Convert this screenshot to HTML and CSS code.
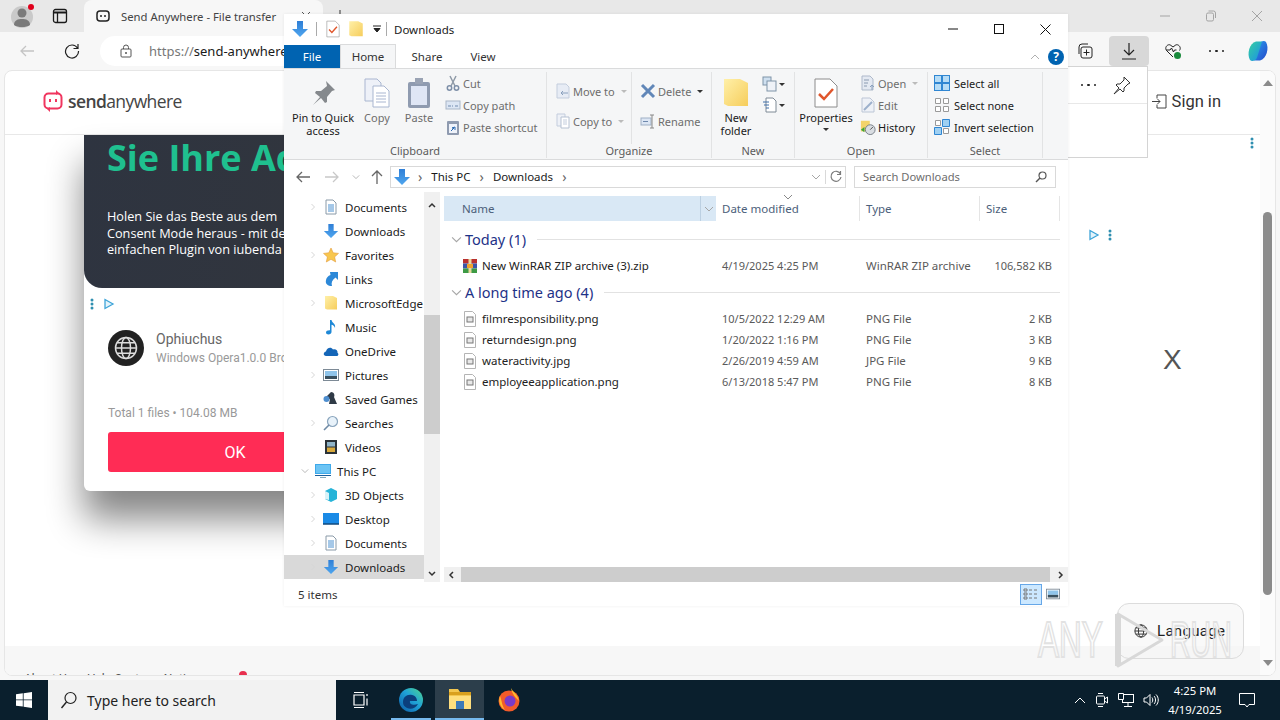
FILE: index.html
```html
<html>
    <head>
        <meta charset="utf-8">
        <title>Send Anywhere - File transfer</title>
        <link rel="stylesheet" href="styles.css">
    </head>
    <body>
        <svg class="defs" width="0" height="0">
            <defs>
                <linearGradient id="blue" x1="0" y1="0" x2="0" y2="1"><stop offset="0" stop-color="#2f7fd6"/><stop offset="1" stop-color="#4fa6ef"/></linearGradient>
                <linearGradient id="yellow" x1="0" y1="0" x2="1" y2="1"><stop offset="0" stop-color="#fff0a8"/><stop offset="1" stop-color="#f6cd5c"/></linearGradient>
                <linearGradient id="edge" x1="1" y1="0" x2="0" y2="1"><stop offset="0" stop-color="#4fd88c"/><stop offset=".45" stop-color="#1fa2d8"/><stop offset="1" stop-color="#0c59a4"/></linearGradient>
                <linearGradient id="copilot" x1="0" y1="0" x2="1" y2="1"><stop offset="0" stop-color="#35d0a0"/><stop offset="1" stop-color="#1b8fe8"/></linearGradient>
                <linearGradient id="copilot2" x1="0" y1="0" x2="1" y2="1"><stop offset="0" stop-color="#2a9ff0"/><stop offset="1" stop-color="#2448c8"/></linearGradient>
                <symbol id="i-down" viewBox="0 0 18 18"><path d="M6 1h6v8h5l-8 8-8-8h5z" fill="url(#blue)"/></symbol>
                <symbol id="i-doc" viewBox="0 0 16 16"><path d="M3 1h7l3 3v11H3z" fill="#fff" stroke="#8a9aa8"/><path d="M5 6h6M5 8h6M5 10h6M5 12h6" stroke="#4a90d0"/></symbol>
                <symbol id="i-file" viewBox="0 0 16 16"><path d="M2.500 .5h8l3 3v12h-11z" fill="#fff" stroke="#b4b4b4"/><rect x="5" y="6" width="6" height="5" fill="#e8e8e8" stroke="#777"/></symbol>
                <symbol id="i-folder" viewBox="0 0 16 16"><path d="M2 1h8l4 2v11.500H4l-2-1z" fill="url(#yellow)"/></symbol>
                <symbol id="i-check" viewBox="0 0 32 32"><path d="M5 2h15l7 7v21H5z" fill="#fff" stroke="#8c8c8c"/><path d="M9 17l5 5 9-10" fill="none" stroke="#e0562c" stroke-width="2.500"/></symbol>
                <symbol id="i-pin" viewBox="0 0 32 32"><path d="M19 4l9 9-3 1-5 6 0 5-2 1-4-5-8 7 7-8-5-4 1-2 5 0 6-5z" fill="#85898d"/></symbol>
                <symbol id="i-copy" viewBox="0 0 32 32"><path d="M4 2h12l4 4v18H4z" fill="#eef1f8" stroke="#a9b6d0"/><path d="M12 9h11l5 5v16H12z" fill="#fff" stroke="#a9b6d0"/><path d="M15 16h10M15 19h10M15 22h10M15 25h10" stroke="#a9b6d0"/></symbol>
                <symbol id="i-paste" viewBox="0 0 32 32"><rect x="5" y="5" width="22" height="26" rx="2" fill="#8f9bb0"/><rect x="8" y="9" width="16" height="19" fill="#dfe6f5"/><rect x="12" y="1" width="8" height="6" fill="#9aa3b4"/></symbol>
                <symbol id="i-cut" viewBox="0 0 16 16"><path d="M5 1l5 10M11 1L6 11" stroke="#8f9aa8" stroke-width="1.500"/><circle cx="4.500" cy="13" r="2.200" fill="none" stroke="#7d8fa8" stroke-width="1.500"/><circle cx="11.500" cy="13" r="2.200" fill="none" stroke="#7d8fa8" stroke-width="1.500"/></symbol>
                <symbol id="i-path" viewBox="0 0 16 16"><rect x="1" y="4" width="14" height="8" fill="#dce6f4" stroke="#a9b6c8"/><path d="M3 9h3M7 9h1M10 9h3" stroke="#6f89ad"/></symbol>
                <symbol id="i-shortcut" viewBox="0 0 16 16"><rect x="2" y="2" width="12" height="14" rx="1" fill="#8f9bb0"/><rect x="4" y="5" width="8" height="9" fill="#eef2fa"/><path d="M6 12l3-3-2 0 3-1v3" stroke="#2c6ab0" fill="none"/></symbol>
                <symbol id="i-moveto" viewBox="0 0 16 16"><path d="M2 1h9l3 3v11H2z" fill="#e7ecf5" stroke="#c3cddd"/><path d="M13 10H6m2-2l-2 2 2 2" stroke="#8aa0bd" fill="none"/></symbol>
                <symbol id="i-copyto" viewBox="0 0 16 16"><path d="M2 1h8v12H2z" fill="#eef1f7" stroke="#c3cddd"/><path d="M6 4h8v11H6z" fill="#fff" stroke="#b6c1d2"/><path d="M8 7h4M8 9h4M8 11h4" stroke="#c3cddd"/></symbol>
                <symbol id="i-x" viewBox="0 0 16 16"><path d="M2 2l12 12M14 2L2 14" stroke="#6187b8" stroke-width="3"/></symbol>
                <symbol id="i-rename" viewBox="0 0 16 16"><rect x="1" y="5" width="10" height="7" fill="#dce6f4" stroke="#9fb0c6"/><path d="M3 8.500h5" stroke="#6f89ad"/><path d="M12 2v13M10 2h4M10 15h4" stroke="#888"/></symbol>
                <symbol id="i-newitem" viewBox="0 0 16 16"><rect x="1" y="1" width="8" height="8" fill="#cfe0f0" stroke="#7f93a8"/><rect x="5" y="5" width="9" height="10" fill="#eef2f8" stroke="#7f93a8"/></symbol>
                <symbol id="i-easy" viewBox="0 0 16 16"><path d="M4 1h7l3 3v11H4z" fill="#fff" stroke="#7f8a96"/><path d="M1 5h6M2 8h5M4 11h3" stroke="#3f6fa8"/></symbol>
                <symbol id="i-open" viewBox="0 0 16 16"><path d="M2 1h8l3 3v11H2z" fill="#e4e9f2" stroke="#aeb9ca"/><path d="M4 5h5M4 8h4M4 11h3" stroke="#8a9ab0"/><path d="M12 15v-5m-2 2l2-2 2 2" stroke="#8aa0bd" fill="none"/></symbol>
                <symbol id="i-edit" viewBox="0 0 16 16"><path d="M2 1h8l4 4v10H2z" fill="#eef1f7" stroke="#bcc6d6"/><path d="M4 13l8-8" stroke="#9cb0cc" stroke-width="2"/></symbol>
                <symbol id="i-history" viewBox="0 0 18 18"><path d="M1 2h10v12H1z" fill="#f3d36a"/><circle cx="11.500" cy="12" r="5.500" fill="#d9dde2" stroke="#6f7780"/><path d="M11.500 12l3-3" stroke="#444"/><path d="M1 12l4-3v6z" fill="#3ea53a"/></symbol>
                <symbol id="i-all" viewBox="0 0 16 16"><rect width="16" height="16" fill="#2f86d2"/><path d="M1 1h6v6H1zM9 1h6v6H9zM1 9h6v6H1zM9 9h6v6H9z" fill="#b6dcf6"/></symbol>
                <symbol id="i-none" viewBox="0 0 16 16"><path d="M1.500 1.500h5v5h-5zM9.500 1.500h5v5h-5zM1.500 9.500h5v5h-5zM9.500 9.500h5v5h-5z" fill="#fff" stroke="#9a9a9a"/></symbol>
                <symbol id="i-invert" viewBox="0 0 16 16"><path d="M8.500 .5h7v7h-7zM.5 8.500h7v7h-7z" fill="#9fd0f2" stroke="#2f86d2"/><path d="M1.500 1.500h5v5h-5zM9.500 9.500h5v5h-5z" fill="#fff" stroke="#9a9a9a"/></symbol>
                <symbol id="i-rar" viewBox="0 0 16 16"><rect x="1" y="1" width="14" height="4.500" fill="#b9302f"/><rect x="1" y="5.500" width="14" height="5" fill="#3a55a8"/><rect x="1" y="10.500" width="14" height="4.500" fill="#3d9a45"/><rect x="6.500" y="1" width="3" height="14" fill="#e8d9a0"/><rect x="5" y="6" width="6" height="4" fill="#f2a32c"/></symbol>
                <symbol id="i-star" viewBox="0 0 16 16"><path d="M8 1l2.200 4.800 5.300.6-3.900 3.500 1.100 5.100L8 12.300l-4.700 2.700 1.100-5.100L.5 6.400l5.300-.6z" fill="#f8c74e" stroke="#e39a3a" stroke-width=".6"/></symbol>
                <symbol id="i-link" viewBox="0 0 16 16"><path d="M7 1h8v8l-2.500-2.500C9 9 8 12 9 15 5 15 2 13 3 9c.6-2.500 2-4 4.500-5z" fill="#2c88d8"/></symbol>
                <symbol id="i-music" viewBox="0 0 16 16"><path d="M7 1h1.500c.5 3 4.500 3.500 3.500 8-.5-2-2-3-3.500-3.200V13c0 1.500-1.500 2.500-3 2.500S3 14.500 3 13.200 4.800 11 7 11.200z" fill="#1e88d6"/></symbol>
                <symbol id="i-cloud" viewBox="0 0 16 16"><path d="M3 13c-3 0-3-4 0-4.500C3.500 5 8 3 10 6.500c2.500-1 5 1 4.500 3.200 1.500 1 1 3.300-1 3.300z" fill="#1466b8"/></symbol>
                <symbol id="i-picture" viewBox="0 0 16 16"><rect x=".5" y="2.500" width="15" height="11" fill="#fff" stroke="#7d8a96"/><rect x="2" y="4" width="12" height="5" fill="#8fc4ea"/><rect x="2" y="9" width="12" height="3" fill="#39505f"/></symbol>
                <symbol id="i-games" viewBox="0 0 16 16"><path d="M8 1c3 0 4 3 3 5l3 7H6l1-5-3 1-2-2z" fill="#2f3a46"/><circle cx="3.500" cy="8" r="3" fill="#4f8fd0"/></symbol>
                <symbol id="i-search" viewBox="0 0 16 16"><circle cx="9.500" cy="6.500" r="5" fill="#e8f2fa" stroke="#8aa5bd" stroke-width="1.200"/><path d="M6 10l-5 5" stroke="#6e8aa5" stroke-width="1.600"/></symbol>
                <symbol id="i-film" viewBox="0 0 16 16"><rect x="2" y="1" width="12" height="14" fill="#2a3238"/><rect x="4" y="3" width="8" height="4.500" fill="#8fb4c8"/><rect x="4" y="8.500" width="8" height="4.500" fill="#d8a93c"/></symbol>
                <symbol id="i-pc" viewBox="0 0 16 16"><rect y="1" width="16" height="10" fill="#3fa9ea"/><rect x="1" y="2" width="14" height="8" fill="#6cc4f4"/><path d="M0 12.500h16" stroke="#1a5f9c"/><path d="M5 14.500h6" stroke="#8ab"/></symbol>
                <symbol id="i-3d" viewBox="0 0 16 16"><path d="M8 1l6 3v8l-6 3-6-3V4z" fill="#27b4d8"/><path d="M2 4l4 2v7l-4-1z" fill="#d8f2f8"/></symbol>
                <symbol id="i-desk" viewBox="0 0 16 16"><rect y="2" width="16" height="11" fill="#1a8ae6"/><path d="M0 13h16" stroke="#10487c" stroke-width="1.500"/></symbol>
                <symbol id="i-chev" viewBox="0 0 8 8"><path d="M2.500 1l3 3-3 3" fill="none" stroke="#d6d6d6"/></symbol>
                <symbol id="i-chevd" viewBox="0 0 10 10"><path d="M1 3l4 4 4-4" fill="none" stroke="#a6a6a6"/></symbol>
                <symbol id="i-globe" viewBox="0 0 16 16"><circle cx="8" cy="8" r="7" fill="none" stroke="currentColor"/><ellipse cx="8" cy="8" rx="3" ry="7" fill="none" stroke="currentColor"/><path d="M1 8h14M2 4.500h12M2 11.500h12" stroke="currentColor"/></symbol>
                <symbol id="i-adplay" viewBox="0 0 12 12"><path d="M2 1.500l8 4.500-8 4.500z" fill="#e3f3fb" stroke="#3ea4d8" stroke-width="1.300"/></symbol>
                <symbol id="i-addots" viewBox="0 0 4 12"><circle cx="2" cy="2" r="1.500" fill="#2f8fb0"/><circle cx="2" cy="6" r="1.500" fill="#2f8fb0"/><circle cx="2" cy="10" r="1.500" fill="#2f8fb0"/></symbol>
            </defs>
        </svg>

        <div class="browser">
            <div class="tabbar">
                <div class="profile">
                    <svg width="26" height="26" viewBox="0 0 26 26"><circle cx="12" cy="14" r="11" fill="#c9c9c9"/><circle cx="12" cy="10" r="4.500" fill="#7a7a7a"/><path d="M4 22c0-5 4-6 8-6s8 1 8 6c-2 1.500-5 2-8 2s-6-.5-8-2z" fill="#7a7a7a"/><circle cx="21" cy="4" r="3" fill="#e0001c"/></svg>
                </div>
                <div class="tab-actions">
                    <svg width="16" height="16" viewBox="0 0 16 16"><rect x="1.500" y="1.500" width="13" height="13" rx="2" fill="none" stroke="#1a1a1a" stroke-width="1.300"/><path d="M2 4.500h12" stroke="#1a1a1a" stroke-width="2"/><path d="M5.500 4v10" stroke="#1a1a1a" stroke-width="1.300"/></svg>
                </div>
                <div class="tab">
                    <svg width="14" height="14" viewBox="0 0 14 14"><rect x="1" y="2" width="12" height="10" rx="3" fill="none" stroke="#222" stroke-width="1.500"/><path d="M5 6v2M9 6v2" stroke="#222" stroke-width="1.500"/></svg>
                    <span>Send Anywhere - File transfer</span>
                    <svg class="tab-close" width="8" height="8" viewBox="0 0 8 8"><path d="M0 0l8 8M8 0L0 8" stroke="#555"/></svg>
                </div>
                <svg class="tab-new" width="12" height="12" viewBox="0 0 12 12"><path d="M6 0v12M0 6h12" stroke="#333"/></svg>
                <div class="spacer"></div>
                <div class="win-controls">
                    <svg width="12" height="12" viewBox="0 0 12 12"><path d="M1 6h10" stroke="#a4a4a4"/></svg>
                    <svg width="12" height="12" viewBox="0 0 12 12"><rect x="1.500" y="3" width="7" height="8" rx="1.500" fill="none" stroke="#a4a4a4"/><path d="M3.500 1h5a2 2 0 0 1 2 2v5" fill="none" stroke="#a4a4a4"/></svg>
                    <svg width="12" height="12" viewBox="0 0 12 12"><path d="M1 1l10 10M11 1L1 11" stroke="#a4a4a4"/></svg>
                </div>
            </div>
            <div class="toolbar">
                <svg class="tool-back" width="16" height="16" viewBox="0 0 16 16"><path d="M15 8H2m5-5L2 8l5 5" fill="none" stroke="#c4c4c4" stroke-width="1.300"/></svg>
                <svg class="tool-reload" width="16" height="16" viewBox="0 0 16 16"><path d="M13.500 5A6.500 6.500 0 1 0 14.500 8M14 1v4.500H9.500" fill="none" stroke="#222" stroke-width="1.200"/></svg>
                <div class="urlbar">
                    <svg width="12" height="14" viewBox="0 0 12 14"><rect x="1" y="5" width="10" height="8" rx="1" fill="none" stroke="#555"/><path d="M3.500 5V3.500a2.500 2.500 0 0 1 5 0V5" fill="none" stroke="#555"/><circle cx="6" cy="9" r="1" fill="#555"/></svg>
                    <span><i>https://</i>send-anywhere.com</span>
                </div>
                <div class="tool-right">
                    <svg width="18" height="18" viewBox="0 0 18 18"><rect x="5" y="5" width="11" height="11" rx="2" fill="none" stroke="#222"/><path d="M3 12V5a3 3 0 0 1 3-3h6" fill="none" stroke="#222"/><path d="M10.500 7.500v6M7.500 10.500h6" stroke="#222"/></svg>
                    <div class="tool-download">
                        <svg width="16" height="18" viewBox="0 0 16 18"><path d="M8 1v12M3 8l5 5 5-5M1 17h14" fill="none" stroke="#222" stroke-width="1.200"/></svg>
                    </div>
                    <svg width="18" height="18" viewBox="0 0 18 18"><path d="M9 15L2.500 8.500C0 5 4.500 1 7 3.500L9 5l2-1.500C13.500 1 18 5 15.500 8.500" fill="none" stroke="#222"/><path d="M2 8h4l1.500-2 2 4 1-2h2" fill="none" stroke="#222"/><circle cx="13.500" cy="13.500" r="3.500" fill="#1a8a3c"/></svg>
                    <div class="tool-dots"><b></b><b></b><b></b></div>
                    <svg width="24" height="24" viewBox="0 0 24 24"><path d="M20 3c3.500 6 .5 17-6 18.500H8l5-16c1-3 5-4.500 7-2.500z" fill="url(#copilot2)"/><path d="M4 21C.5 15 3.500 4 10 2.500h6l-5 16c-1 3-5 4.500-7 2.500z" fill="url(#copilot)"/></svg>
                </div>
            </div>

            <div class="page">
                <div class="site-header">
                    <div class="logo">
                        <svg width="20" height="22" viewBox="0 0 20 22"><rect x="1.500" y="3.500" width="17" height="15" rx="4" fill="none" stroke="#f0365f" stroke-width="2"/><path d="M7 9v3M13 9v3" stroke="#f0365f" stroke-width="2"/><path d="M13 0l3 3-3 2zM7 22l-3-3 3-2z" fill="#f0365f"/></svg>
                        <span><b>send</b>anywhere</span>
                    </div>
                    <div class="sign-in">
                        <svg width="15" height="15" viewBox="0 0 15 15"><path d="M5 1h9v13H5v-3M5 4V1" fill="none" stroke="#444"/><path d="M0 7.500h8m-3-3 3 3-3 3" fill="none" stroke="#444"/></svg>
                        <span>Sign in</span>
                    </div>
                </div>
                <div class="site-main">
                    <div class="dialog">
                        <div class="promo">
                            <h2>Sie Ihre Ads</h2>
                            <p>Holen Sie das Beste aus dem<br>Consent Mode heraus - mit dem<br>einfachen Plugin von iubenda</p>
                        </div>
                        <div class="ad-marks">
                            <svg width="4" height="12"><use href="#i-addots"/></svg>
                            <svg width="12" height="12"><use href="#i-adplay"/></svg>
                        </div>
                        <div class="sender">
                            <div class="avatar"><svg width="24" height="24"><use href="#i-globe"/></svg></div>
                            <div class="sender-text">
                                <div class="sender-name">Ophiuchus</div>
                                <div class="sender-device">Windows Opera1.0.0 Browser</div>
                            </div>
                        </div>
                        <div class="total">Total 1 files • 104.08 MB</div>
                        <div class="ok-btn">OK</div>
                    </div>
                    <svg class="dots-top" width="4" height="12"><use href="#i-addots"/></svg>
                    <div class="ad-marks-right">
                        <svg width="12" height="12"><use href="#i-adplay"/></svg>
                        <svg width="4" height="12"><use href="#i-addots"/></svg>
                    </div>
                    <div class="close-x">X</div>
                </div>
                <div class="site-footer">
                    <span>About Us</span><span>Help Center</span><span>Notice</span><b class="red-dot"></b>
                </div>
                <div class="page-scroll">
                    <svg width="10" height="6" viewBox="0 0 10 6"><path d="M5 0l5 6H0z" fill="#8b8b8b"/></svg>
                    <div class="page-thumb"></div>
                    <svg width="10" height="6" viewBox="0 0 10 6"><path d="M5 6l5-6H0z" fill="#8b8b8b"/></svg>
                </div>
            </div>
        </div>

        <div class="dl-flyout">
            <div class="dl-head">
                <div class="tool-dots flyout"><b></b><b></b><b></b></div>
                <svg width="20" height="20" viewBox="0 0 20 20"><path d="M12 2l6 6-2 1-4 4 0 3-1 1-3-3-6 5 5-6-3-3 1-1 3 0 4-4z" fill="none" stroke="#333"/></svg>
            </div>
        </div>

        <div class="explorer">
            <div class="ex-title">
                <svg width="18" height="18"><use href="#i-down"/></svg>
                <i class="ex-sep"></i>
                <svg width="18" height="18"><use href="#i-check"/></svg>
                <svg width="18" height="18"><use href="#i-folder"/></svg>
                <svg class="qat-arrow" width="8" height="8" viewBox="0 0 8 8"><path d="M0 1h8M1 3.500h6L4 7z" stroke="#222" fill="#222"/></svg>
                <i class="ex-sep"></i>
                <span class="ex-name">Downloads</span>
                <div class="ex-controls">
                    <svg width="10" height="10" viewBox="0 0 10 10"><path d="M0 5h10" stroke="#111"/></svg>
                    <svg width="10" height="10" viewBox="0 0 10 10"><rect x=".5" y=".5" width="9" height="9" fill="none" stroke="#111"/></svg>
                    <svg width="11" height="11" viewBox="0 0 11 11"><path d="M.5.5l10 10M10.500.5l-10 10" stroke="#111"/></svg>
                </div>
            </div>
            <div class="ex-tabs">
                <div class="ex-tab file">File</div>
                <div class="ex-tab active">Home</div>
                <div class="ex-tab share">Share</div>
                <div class="ex-tab view">View</div>
                <div class="ex-help">
                    <svg width="10" height="6" viewBox="0 0 10 6"><path d="M1 5l4-4 4 4" fill="none" stroke="#b0b0b0"/></svg>
                    <span class="help-badge">?</span>
                </div>
            </div>
            <div class="ribbon">
                <div class="group g-clipboard">
                    <div class="group-body">
                        <div class="big w-pin"><svg width="32" height="32"><use href="#i-pin"/></svg><span>Pin to Quick<br>access</span></div>
                        <div class="big w-copy dim"><svg width="32" height="32"><use href="#i-copy"/></svg><span>Copy</span></div>
                        <div class="big w-paste dim"><svg width="32" height="32"><use href="#i-paste"/></svg><span>Paste</span></div>
                        <div class="small-col dim">
                            <div class="small"><svg width="16" height="16"><use href="#i-cut"/></svg>Cut</div>
                            <div class="small"><svg width="16" height="16"><use href="#i-path"/></svg>Copy path</div>
                            <div class="small"><svg width="16" height="16"><use href="#i-shortcut"/></svg>Paste shortcut</div>
                        </div>
                    </div>
                    <div class="group-label">Clipboard</div>
                </div>
                <div class="group g-organize">
                    <div class="group-body">
                        <div class="tall-col dim w-move">
                            <div class="small"><svg width="16" height="16"><use href="#i-moveto"/></svg>Move to<em class="caret light"></em></div>
                            <div class="small"><svg width="16" height="16"><use href="#i-copyto"/></svg>Copy to<em class="caret light"></em></div>
                        </div>
                        <div class="tall-col dim">
                            <div class="small"><svg width="16" height="16"><use href="#i-x"/></svg>Delete<em class="caret"></em></div>
                            <div class="small"><svg width="16" height="16"><use href="#i-rename"/></svg>Rename</div>
                        </div>
                    </div>
                    <div class="group-label">Organize</div>
                </div>
                <div class="group g-new">
                    <div class="group-body">
                        <div class="big w-folder"><svg width="32" height="32"><use href="#i-folder"/></svg><span>New<br>folder</span></div>
                        <div class="icon-col">
                            <div><svg width="16" height="16"><use href="#i-newitem"/></svg><em class="caret"></em></div>
                            <div><svg width="16" height="16"><use href="#i-easy"/></svg><em class="caret"></em></div>
                        </div>
                    </div>
                    <div class="group-label">New</div>
                </div>
                <div class="group g-open">
                    <div class="group-body">
                        <div class="big w-props"><svg width="32" height="32"><use href="#i-check"/></svg><span>Properties</span><em class="caret"></em></div>
                        <div class="small-col">
                            <div class="small dim"><svg width="16" height="16"><use href="#i-open"/></svg>Open<em class="caret light"></em></div>
                            <div class="small dim"><svg width="16" height="16"><use href="#i-edit"/></svg>Edit</div>
                            <div class="small"><svg width="16" height="16"><use href="#i-history"/></svg>History</div>
                        </div>
                    </div>
                    <div class="group-label">Open</div>
                </div>
                <div class="group g-select">
                    <div class="group-body">
                        <div class="small-col">
                            <div class="small"><svg width="16" height="16"><use href="#i-all"/></svg>Select all</div>
                            <div class="small"><svg width="16" height="16"><use href="#i-none"/></svg>Select none</div>
                            <div class="small"><svg width="16" height="16"><use href="#i-invert"/></svg>Invert selection</div>
                        </div>
                    </div>
                    <div class="group-label">Select</div>
                </div>
            </div>
            <div class="ex-nav">
                <svg class="nav-back" width="16" height="16" viewBox="0 0 16 16"><path d="M15 8H2m5-5L2 8l5 5" fill="none" stroke="#666" stroke-width="1.300"/></svg>
                <svg class="nav-fwd" width="16" height="16" viewBox="0 0 16 16"><path d="M1 8h13M9 3l5 5-5 5" fill="none" stroke="#c8c8c8" stroke-width="1.300"/></svg>
                <svg class="nav-small" width="8" height="8"><use href="#i-chevd"/></svg>
                <svg class="nav-up" width="16" height="16" viewBox="0 0 16 16"><path d="M8 15V2M3 7l5-5 5 5" fill="none" stroke="#666" stroke-width="1.300"/></svg>
                <div class="addr">
                    <svg width="18" height="18"><use href="#i-down"/></svg>
                    <em class="crumb-sep">›</em><span>This PC</span><em class="crumb-sep">›</em><span>Downloads</span><em class="crumb-sep">›</em>
                    <div class="addr-end">
                        <svg width="10" height="10"><use href="#i-chevd"/></svg>
                        <svg class="addr-refresh" width="14" height="14" viewBox="0 0 14 14"><path d="M11.500 4A5 5 0 1 0 12 7M11.500 1v3.500H8" fill="none" stroke="#7b7b7b" stroke-width="1.200"/></svg>
                    </div>
                </div>
                <div class="search-box">
                    <span>Search Downloads</span>
                    <svg width="12" height="12" viewBox="0 0 12 12"><circle cx="7.500" cy="4.500" r="3.500" fill="none" stroke="#555" stroke-width="1.200"/><path d="M5 7l-4 4" stroke="#555" stroke-width="1.500"/></svg>
                </div>
            </div>
            <div class="ex-body">
                <div class="tree">
                    <div class="tree-row"><svg class="tw" width="8" height="8"><use href="#i-chev"/></svg><svg width="16" height="16"><use href="#i-doc"/></svg>Documents</div>
                    <div class="tree-row"><svg class="tw" width="8" height="8"></svg><svg width="16" height="16"><use href="#i-down"/></svg>Downloads</div>
                    <div class="tree-row"><svg class="tw" width="8" height="8"><use href="#i-chev"/></svg><svg width="16" height="16"><use href="#i-star"/></svg>Favorites</div>
                    <div class="tree-row"><svg class="tw" width="8" height="8"></svg><svg width="16" height="16"><use href="#i-link"/></svg>Links</div>
                    <div class="tree-row"><svg class="tw" width="8" height="8"><use href="#i-chev"/></svg><svg width="16" height="16"><use href="#i-folder"/></svg>MicrosoftEdge</div>
                    <div class="tree-row"><svg class="tw" width="8" height="8"></svg><svg width="16" height="16"><use href="#i-music"/></svg>Music</div>
                    <div class="tree-row"><svg class="tw" width="8" height="8"></svg><svg width="16" height="16"><use href="#i-cloud"/></svg>OneDrive</div>
                    <div class="tree-row"><svg class="tw" width="8" height="8"><use href="#i-chev"/></svg><svg width="16" height="16"><use href="#i-picture"/></svg>Pictures</div>
                    <div class="tree-row"><svg class="tw" width="8" height="8"></svg><svg width="16" height="16"><use href="#i-games"/></svg>Saved Games</div>
                    <div class="tree-row"><svg class="tw" width="8" height="8"><use href="#i-chev"/></svg><svg width="16" height="16"><use href="#i-search"/></svg>Searches</div>
                    <div class="tree-row"><svg class="tw" width="8" height="8"></svg><svg width="16" height="16"><use href="#i-film"/></svg>Videos</div>
                    <div class="tree-row root"><svg class="tw" width="8" height="8"><use href="#i-chevd"/></svg><svg width="16" height="16"><use href="#i-pc"/></svg>This PC</div>
                    <div class="tree-row"><svg class="tw" width="8" height="8"><use href="#i-chev"/></svg><svg width="16" height="16"><use href="#i-3d"/></svg>3D Objects</div>
                    <div class="tree-row"><svg class="tw" width="8" height="8"><use href="#i-chev"/></svg><svg width="16" height="16"><use href="#i-desk"/></svg>Desktop</div>
                    <div class="tree-row"><svg class="tw" width="8" height="8"><use href="#i-chev"/></svg><svg width="16" height="16"><use href="#i-doc"/></svg>Documents</div>
                    <div class="tree-row sel"><svg class="tw" width="8" height="8"><use href="#i-chev"/></svg><svg width="16" height="16"><use href="#i-down"/></svg>Downloads</div>
                </div>
                <div class="tree-scroll">
                    <svg width="8" height="6" viewBox="0 0 8 6"><path d="M1 5l3-3 3 3" fill="none" stroke="#333" stroke-width="1.500"/></svg>
                    <div class="tree-thumb"></div>
                    <svg width="8" height="6" viewBox="0 0 8 6"><path d="M1 1l3 3 3-3" fill="none" stroke="#333" stroke-width="1.500"/></svg>
                </div>
                <div class="files">
                    <div class="col-head">
                        <div class="col name">Name<em><svg width="10" height="10"><use href="#i-chevd"/></svg></em></div>
                        <div class="col date">Date modified<svg class="sort-mark" width="8" height="5" viewBox="0 0 8 5"><path d="M0 0l4 4 4-4" fill="none" stroke="#888"/></svg></div>
                        <div class="col type">Type</div>
                        <div class="col size">Size</div>
                    </div>
                    <div class="file-group first"><svg width="11" height="11"><use href="#i-chevd"/></svg><span>Today (1)</span><i></i></div>
                    <div class="file-row tall"><svg width="16" height="16"><use href="#i-rar"/></svg><span>New WinRAR ZIP archive (3).zip</span><span class="when">4/19/2025 4:25 PM</span><span>WinRAR ZIP archive</span><span class="num">106,582 KB</span></div>
                    <div class="file-group"><svg width="11" height="11"><use href="#i-chevd"/></svg><span>A long time ago (4)</span><i></i></div>
                    <div class="file-row"><svg width="16" height="16"><use href="#i-file"/></svg><span>filmresponsibility.png</span><span class="when">10/5/2022 12:29 AM</span><span>PNG File</span><span class="num">2 KB</span></div>
                    <div class="file-row"><svg width="16" height="16"><use href="#i-file"/></svg><span>returndesign.png</span><span class="when">1/20/2022 1:16 PM</span><span>PNG File</span><span class="num">3 KB</span></div>
                    <div class="file-row"><svg width="16" height="16"><use href="#i-file"/></svg><span>wateractivity.jpg</span><span class="when">2/26/2019 4:59 AM</span><span>JPG File</span><span class="num">9 KB</span></div>
                    <div class="file-row"><svg width="16" height="16"><use href="#i-file"/></svg><span>employeeapplication.png</span><span class="when">6/13/2018 5:47 PM</span><span>PNG File</span><span class="num">8 KB</span></div>
                    <div class="h-scroll">
                        <svg width="6" height="8" viewBox="0 0 6 8"><path d="M5 1L2 4l3 3" fill="none" stroke="#333" stroke-width="1.500"/></svg>
                        <div class="h-thumb"></div>
                        <svg width="6" height="8" viewBox="0 0 6 8"><path d="M1 1l3 3-3 3" fill="none" stroke="#333" stroke-width="1.500"/></svg>
                    </div>
                </div>
            </div>
            <div class="ex-status">
                <span>5 items</span>
                <div class="view-btns">
                    <div class="view-on"><svg width="16" height="14" viewBox="0 0 16 14"><path d="M1 2h3v2H1zM1 6h3v2H1zM1 10h3v2H1z" fill="none" stroke="#777"/><path d="M6 3h3M11 3h3M6 7h3M11 7h3M6 11h3M11 11h3" stroke="#777"/></svg></div>
                    <svg width="14" height="14"><use href="#i-picture"/></svg>
                </div>
            </div>
        </div>

        <div class="language"><svg width="14" height="14"><use href="#i-globe"/></svg><span>Language</span></div>
        <div class="watermark">
            <span class="wm-any">ANY</span>
            <svg width="52" height="60" viewBox="0 0 52 60"><path d="M5 4l44 26-44 26z" fill="none" stroke="#d8d8d8" stroke-width="3" stroke-linejoin="round"/><path d="M5 4v52" stroke="#d8d8d8" stroke-width="6"/></svg>
            <span class="wm-run">RUN</span>
        </div>

        <div class="taskbar">
            <div class="start"><svg width="16" height="16" viewBox="0 0 16 16"><path d="M0 2.200l6.800-.9v6.200H0zM7.600 1.200L16 0v7.500H7.600zM0 8.300h6.800v6.300L0 13.800zM7.600 8.300H16V16l-8.400-1.200z" fill="#fff"/></svg></div>
            <div class="task-search">
                <svg width="18" height="18" viewBox="0 0 18 18"><circle cx="10.500" cy="7" r="5.500" fill="none" stroke="#222" stroke-width="1.200"/><path d="M6.500 11l-5 6" stroke="#222" stroke-width="1.400"/></svg>
                <span>Type here to search</span>
            </div>
            <div class="task-view"><svg width="16" height="16" viewBox="0 0 16 16"><path d="M1 3h10v10H1zM1 .5h10M1 15.500h10M14 2v2M14 6.500v7" fill="none" stroke="#fff" stroke-width="1.200"/></svg></div>
            <div class="task-app running"><svg width="24" height="24" viewBox="0 0 24 24"><circle cx="12" cy="12" r="12" fill="url(#edge)"/><path d="M4 14c0-5 4-8 9-7 3 .5 5 3 5 6h-7c-1 3 3 5 8 3-2 4-7 6-11 4-3-1.500-4-3-4-6z" fill="#0b3f7c"/></svg></div>
            <div class="task-app active"><svg width="24" height="22" viewBox="0 0 24 22"><path d="M1 1h9l2 3h11v17H1z" fill="#f3c64f"/><rect x="1" y="4" width="22" height="3" fill="#d9a01e"/><rect x="1" y="8" width="22" height="13" fill="#ffdf7e"/><rect x="8" y="13" width="8" height="8" fill="#3d7ab8"/></svg></div>
            <div class="task-app"><svg width="24" height="24" viewBox="0 0 24 24"><circle cx="12" cy="13" r="10.500" fill="#f25b2a"/><path d="M14 0c2 4 7 7 8 13-3-3-7-7-8-13z" fill="#ffbc2c"/><path d="M3 8c-2 5 0 11 5 14-3-4-3-9-5-14z" fill="#ffbc2c"/><circle cx="13" cy="13" r="5.500" fill="#7a3ac8"/></svg></div>
            <div class="spacer"></div>
            <div class="tray">
                <svg width="12" height="8" viewBox="0 0 12 8"><path d="M1 7l5-5 5 5" fill="none" stroke="#fff"/></svg>
                <svg width="14" height="16" viewBox="0 0 14 16"><rect x="1.500" y="4" width="8" height="8" rx="1" fill="none" stroke="#fff"/><path d="M9.500 7l3-2v6l-3-2M3 1.500h5M3 14.500h5" fill="none" stroke="#fff"/></svg>
                <svg width="16" height="16" viewBox="0 0 16 16"><rect x="4.500" y="2.500" width="11" height="8" fill="none" stroke="#fff"/><path d="M10 11v3M6 14.500h8M.5 1.500h5v6h-5z" fill="#0a1f2d" stroke="#fff"/></svg>
                <svg width="16" height="16" viewBox="0 0 16 16"><path d="M1 6h2.500L7 2.500v11L3.500 10H1zM9 5.500c1 1.500 1 3.500 0 5M11 4c2 2 2 6 0 8M13 2.500c3 3 3 8 0 11" fill="none" stroke="#fff"/></svg>
                <div class="clock">4:25 PM<br>4/19/2025</div>
                <svg class="notify" width="16" height="16" viewBox="0 0 16 16"><path d="M.5 1.500h15v11H10l-2 2.500-2-2.500H.5z" fill="none" stroke="#fff"/></svg>
            </div>
        </div>
    </body>
</html>
```

FILE: styles.css
```css
html, body {
    margin: 0;
    padding: 0;
    width: 1280px;
    height: 720px;
    overflow: hidden;
    background-color: #f7f7f7;
    font-family: "Noto Sans", sans-serif;
    font-size: 12px;
    color: #1a1a1a;
}
svg {
    display: block;
    flex: none;
}
.defs {
    position: absolute;
}
.spacer {
    flex: 1;
}

/* browser frame */
.browser {
    height: 680px;
    display: flex;
    flex-direction: column;
}
.tabbar {
    height: 32px;
    display: flex;
    align-items: center;
    background-color: #e8e8e8;
}
.profile {
    width: 44px;
    padding-left: 10px;
    box-sizing: border-box;
}
.tab-actions {
    width: 40px;
    padding-left: 8px;
    box-sizing: border-box;
}
.tab {
    width: 239px;
    height: 32px;
    padding: 0 13px 0 12px;
    box-sizing: border-box;
    display: flex;
    align-items: center;
    gap: 11px;
    background-color: #f7f7f7;
    border-radius: 8px 8px 0 0;
    color: #444;
    font-size: 11.300px;
    white-space: nowrap;
}
.tab-close {
    margin-left: auto;
}
.tab-new {
    margin-left: 11px;
}
.win-controls {
    display: flex;
    gap: 34px;
    padding-right: 17px;
}
.toolbar {
    height: 38px;
    display: flex;
    align-items: center;
    background-color: #f7f7f7;
}
.tool-back {
    margin-left: 19px;
}
.tool-reload {
    margin-left: 29px;
}
.urlbar {
    margin-left: 20px;
    width: 220px;
    height: 30px;
    padding-left: 20px;
    box-sizing: border-box;
    display: flex;
    align-items: center;
    gap: 17px;
    background-color: #fff;
    border-radius: 15px;
    font-size: 13px;
    white-space: nowrap;
    overflow: hidden;
}
.urlbar i {
    font-style: normal;
    color: #777;
}
.tool-right {
    margin-left: auto;
    display: flex;
    align-items: center;
    padding-right: 10px;
}
.tool-right > svg:first-child {
    margin-right: 15px;
}
.tool-download {
    width: 40px;
    height: 30px;
    margin-right: 15px;
    display: flex;
    align-items: center;
    justify-content: center;
    background-color: #d8d8d8;
    border-radius: 4px;
}
.tool-dots {
    margin: 0 22px 0 27px;
    display: flex;
    gap: 4px;
}
.tool-dots b {
    width: 2.500px;
    height: 2.500px;
    border-radius: 50%;
    background-color: #222;
}
.tool-dots.flyout {
    margin: 0;
}

/* the web page behind the windows */
.page {
    flex: 1;
    position: relative;
    margin: 0 4px 4px 4px;
    display: flex;
    flex-direction: column;
    background-color: #fff;
    border: 1px solid #e6e6e6;
    border-radius: 8px;
    overflow: hidden;
}
.site-header {
    height: 64px;
    flex: none;
    box-sizing: border-box;
    display: flex;
    align-items: center;
    justify-content: space-between;
    padding: 0 54px 3px 38px;
    border-bottom: 1px solid #e8e8e8;
}
.logo {
    display: flex;
    align-items: center;
    gap: 5px;
    font-family: "Open Sans", sans-serif;
    font-size: 17.500px;
    letter-spacing: -.6px;
    color: #444;
}
.logo b {
    font-weight: 600;
}
.sign-in {
    display: flex;
    align-items: center;
    gap: 5px;
    font-family: Roboto, sans-serif;
    font-size: 16.500px;
    color: #333;
}
.site-main {
    flex: 1;
    position: relative;
}
.dialog {
    position: absolute;
    left: 79px;
    top: 0;
    width: 400px;
    height: 356px;
    box-sizing: border-box;
    background-color: #fff;
    border-radius: 0 0 6px 6px;
    box-shadow: 0 28px 36px rgba(0,0,0,.48);
    font-family: Roboto, sans-serif;
}
.promo {
    height: 153px;
    box-sizing: border-box;
    padding: 1px 0 0 23px;
    background: linear-gradient(100deg, #2e3440, #33363c);
    border-radius: 0 0 0 18px;
    color: #fff;
    overflow: hidden;
    white-space: nowrap;
}
.promo h2 {
    margin: 0;
    font-family: "Open Sans", sans-serif;
    font-size: 36px;
    line-height: 44px;
    font-weight: 700;
    color: #1fc08f;
}
.promo p {
    margin: 28px 0 0 0;
    font-family: "Open Sans", sans-serif;
    font-size: 12.700px;
    line-height: 16.500px;
}
.ad-marks {
    display: flex;
    align-items: center;
    gap: 9px;
    height: 12px;
    padding: 10px 0 0 6px;
}
.sender {
    display: flex;
    align-items: center;
    gap: 12px;
    margin: 19px 0 0 24px;
}
.avatar {
    width: 36px;
    height: 36px;
    display: flex;
    align-items: center;
    justify-content: center;
    border-radius: 50%;
    background-color: #222;
    color: #ddd;
}
.sender-name {
    font-size: 14px;
    line-height: 20px;
    color: #666;
}
.sender-device {
    font-size: 12px;
    line-height: 18px;
    color: #999;
}
.total {
    margin: 37px 0 0 24px;
    font-size: 12px;
    line-height: 18px;
    color: #999;
}
.ok-btn {
    margin: 10px 0 0 24px;
    width: 254px;
    height: 40px;
    display: flex;
    align-items: center;
    justify-content: center;
    background-color: #ff2c55;
    border-radius: 3px;
    color: #fff;
    font-size: 16px;
}
.dots-top {
    position: absolute;
    left: 1245px;
    top: 2px;
}
.ad-marks-right {
    position: absolute;
    left: 1083px;
    top: 94px;
    display: flex;
    align-items: center;
    gap: 8px;
}
.close-x {
    position: absolute;
    left: 1158px;
    top: 209px;
    font-family: "Liberation Sans", sans-serif;
    font-size: 28px;
    line-height: 32px;
    color: #555;
}
.site-footer {
    height: 29px;
    flex: none;
    display: flex;
    gap: 14px;
    padding: 26px 0 0 19px;
    box-sizing: border-box;
    background-color: #f7f7f7;
    overflow: hidden;
    font-family: Roboto, sans-serif;
    font-size: 12px;
    color: #555;
    position: relative;
}
.red-dot {
    position: absolute;
    left: 234px;
    top: 25px;
    width: 8px;
    height: 8px;
    border-radius: 50%;
    background-color: #e8304f;
}
.page-scroll {
    position: absolute;
    right: 0;
    top: 0;
    bottom: 0;
    width: 15px;
    display: flex;
    flex-direction: column;
    align-items: center;
    padding-top: 9px;
    box-sizing: border-box;
    background-color: #fbfbfb;
}
.page-thumb {
    width: 9px;
    height: 383px;
    flex: none;
    margin: 126px 0 65px 0;
    background-color: #8b8b8b;
    border-radius: 5px;
}

/* download flyout */
.dl-flyout {
    position: absolute;
    left: 1040px;
    top: 66px;
    width: 108px;
    height: 92px;
    box-sizing: border-box;
    background-color: #fff;
    border-right: 1px solid #d4d4d4;
    border-bottom: 1px solid #d4d4d4;
    border-top: 1px solid #d4d4d4;
}
.dl-head {
    height: 36px;
    display: flex;
    align-items: center;
    justify-content: flex-end;
    gap: 16px;
    padding-right: 15px;
    border-bottom: 1px solid #e8e8e8;
}

/* explorer window */
.explorer {
    position: absolute;
    left: 284px;
    top: 14px;
    width: 784px;
    height: 592px;
    display: flex;
    flex-direction: column;
    background-color: #fff;
    box-shadow: 0 0 3px rgba(0,0,0,.07);
    font-family: "Noto Sans", sans-serif;
    font-size: 11.500px;
}
.ex-title {
    height: 30px;
    flex: none;
    display: flex;
    align-items: center;
    gap: 5px;
    padding-left: 7px;
}
.ex-sep {
    width: 1px;
    height: 14px;
    background-color: #aaa;
    margin: 0 2px;
}
.qat-arrow {
    margin: 0 -2px 0 3px;
}
.ex-name {
    font-size: 11.500px;
}
.ex-controls {
    margin-left: auto;
    display: flex;
    align-items: center;
    gap: 36px;
    padding-right: 17px;
}
.ex-tabs {
    height: 24px;
    flex: none;
    display: flex;
    align-items: flex-end;
}
.ex-tab {
    width: 56px;
    height: 23px;
    display: flex;
    align-items: center;
    justify-content: center;
    box-sizing: border-box;
    color: #333;
}
.ex-tab.share {
    width: 62px;
}
.ex-tab.view {
    width: 50px;
}
.ex-tab.file {
    background-color: #0063b1;
    color: #fff;
}
.ex-tab.active {
    height: 24px;
    background-color: #f5f6f7;
    border: 1px solid #dadbdc;
    border-bottom: none;
}
.ex-help {
    margin-left: auto;
    height: 23px;
    display: flex;
    align-items: center;
    gap: 8px;
    padding-right: 4px;
}
.help-badge {
    width: 16px;
    height: 16px;
    display: flex;
    align-items: center;
    justify-content: center;
    border-radius: 50%;
    background-color: #0063b1;
    color: #fff;
    font-weight: bold;
    font-size: 12px;
}
.ribbon {
    height: 92px;
    flex: none;
    display: flex;
    background-color: #f5f6f7;
    border-top: 1px solid #dadbdc;
    border-bottom: 1px solid #dadbdc;
    box-sizing: border-box;
    font-size: 11px;
}
.group {
    display: flex;
    flex-direction: column;
    box-sizing: border-box;
    border-right: 1px solid #e2e3e4;
    margin: 3px 0 1px 0;
}
.g-clipboard { width: 263px; }
.g-organize { width: 165px; }
.g-new { width: 83px; }
.g-open { width: 133px; }
.g-select { width: 115px; }
.group-body {
    flex: 1;
    display: flex;
}
.group-label {
    height: 14px;
    text-align: center;
    line-height: 14px;
    color: #5b5b5b;
}
.big {
    display: flex;
    flex-direction: column;
    align-items: center;
    padding-top: 5px;
    line-height: 13px;
    text-align: center;
}
.big svg {
    margin-bottom: 2px;
}
.w-pin { width: 66px; margin-left: 6px; }
.w-copy { width: 42px; }
.w-paste { width: 42px; }
.w-folder { width: 48px; }
.w-props { width: 60px; margin-left: 1px; }
.g-organize .group-body { padding-left: 8px; }
.dim {
    color: #6d6d6d;
}
.small-col {
    display: flex;
    flex-direction: column;
}
.g-clipboard .small-col { padding-left: 5px; }
.g-select .small-col { padding-left: 6px; }
.g-open .small-col { padding-left: 4px; }
.small {
    height: 22px;
    display: flex;
    align-items: center;
    gap: 1px;
    white-space: nowrap;
}
.small svg {
    margin-right: 1px;
}
.g-select .small svg {
    margin-right: 3px;
}
.tall-col {
    display: flex;
    flex-direction: column;
    justify-content: center;
    gap: 8px;
    padding-bottom: 4px;
}
.w-move {
    width: 77px;
    box-sizing: border-box;
    border-right: 1px solid #e2e3e4;
    margin-right: 8px;
}
.caret {
    display: inline-block;
    width: 0;
    height: 0;
    margin-left: 5px;
    border-left: 3px solid transparent;
    border-right: 3px solid transparent;
    border-top: 3px solid #333;
}
.caret.light {
    border-top-color: #bbb;
}
.big .caret {
    margin: 4px 0 0 0;
}
.icon-col {
    display: flex;
    flex-direction: column;
    gap: 5px;
    padding: 4px 0 0 2px;
}
.icon-col div {
    display: flex;
    align-items: center;
}
.icon-col .caret {
    margin-left: 1px;
}
.ex-nav {
    height: 32px;
    flex: none;
    box-sizing: border-box;
    display: flex;
    align-items: center;
    padding: 1px 0 0 11px;
}
.nav-back { margin-right: 13px; }
.nav-fwd { margin-right: 12px; }
.nav-small { margin-right: 9px; }
.nav-up { margin-right: 5px; }
.addr {
    width: 456px;
    height: 22px;
    box-sizing: border-box;
    padding-left: 2px;
    display: flex;
    align-items: center;
    gap: 5px;
    border: 1px solid #d9d9d9;
}
.addr span {
    margin: 0 2px;
}
.crumb-sep {
    font-style: normal;
    font-size: 14px;
    line-height: 16px;
    color: #666;
    margin: 0 2px;
}
.addr-end {
    margin-left: auto;
    height: 20px;
    display: flex;
    align-items: center;
    gap: 4px;
    padding-right: 2px;
}
.addr-refresh {
    padding-left: 3px;
    border-left: 1px solid #d9d9d9;
    box-sizing: content-box;
}
.search-box {
    width: 202px;
    height: 22px;
    margin-left: 8px;
    padding: 0 8px;
    box-sizing: border-box;
    display: flex;
    align-items: center;
    justify-content: space-between;
    border: 1px solid #d9d9d9;
    color: #6d6d6d;
    font-size: 11.200px;
}
.ex-body {
    height: 390px;
    flex: none;
    display: flex;
    align-items: flex-start;
}
.tree {
    width: 140px;
    height: 388px;
    flex: none;
    box-sizing: border-box;
    padding-top: 3px;
    overflow: hidden;
}
.tree-row {
    height: 24px;
    display: flex;
    align-items: center;
    gap: 6px;
    padding-left: 25px;
    white-space: nowrap;
}
.tree-row.root {
    padding-left: 17px;
}
.tree-row.sel {
    background-color: #d9d9d9;
}
.tree-scroll {
    width: 16px;
    height: 390px;
    flex: none;
    display: flex;
    flex-direction: column;
    align-items: center;
    padding-top: 10px;
    box-sizing: border-box;
    background-color: #f0f0f0;
}
.tree-thumb {
    width: 16px;
    height: 119px;
    flex: none;
    margin: 107px 0 137px 0;
    background-color: #cdcdcd;
}
.files {
    width: 616px;
    margin-left: 4px;
}
.col-head {
    height: 25px;
    margin-top: 4px;
    display: grid;
    grid-template-columns: 272px 144px 120px 80px;
    color: #4c607a;
}
.col {
    display: flex;
    align-items: center;
    padding-left: 6px;
    border-right: 1px solid #e5e5e5;
    position: relative;
}
.col.name {
    padding-left: 18px;
    background-color: #d9e8f5;
    border-right: none;
}
.col.name em {
    position: absolute;
    right: 0;
    top: 0;
    bottom: 0;
    width: 15px;
    display: flex;
    align-items: center;
    justify-content: center;
    border-left: 1px solid #bcd0e2;
}
.sort-mark {
    position: absolute;
    left: 68px;
    top: -1px;
}
.file-group {
    height: 26px;
    margin-left: 7px;
    display: flex;
    align-items: center;
    gap: 3px;
    font-size: 14.500px;
    color: #1e3287;
    white-space: nowrap;
}
.file-group.first {
    margin-top: 5px;
}
.file-group i {
    flex: 1;
    height: 1px;
    margin-left: 8px;
    background-color: #e2e2e2;
}
.file-row {
    height: 21px;
    display: grid;
    grid-template-columns: 20px 240px 144px 108px 78px;
    align-items: center;
    padding-left: 18px;
    color: #5a5a5a;
    white-space: nowrap;
}
.file-row span:nth-child(2) {
    color: #222;
}
.file-row.tall {
    height: 27px;
}
.file-group + .file-row:not(.tall) {
    margin-top: 3px;
}
.when, .num {
    font-size: 11px;
}
.num {
    text-align: right;
}
.h-scroll {
    position: absolute;
    left: 160px;
    top: 553px;
    width: 624px;
    height: 15px;
    display: flex;
    align-items: center;
    justify-content: space-between;
    padding: 0 4px;
    box-sizing: border-box;
    background-color: #f0f0f0;
}
.h-thumb {
    flex: 1;
    height: 15px;
    margin: 0 8px 0 7px;
    background-color: #cdcdcd;
}
.ex-status {
    flex: 1;
    display: flex;
    align-items: center;
    justify-content: space-between;
    padding: 0 8px 0 14px;
    color: #333;
}
.view-btns {
    display: flex;
    align-items: center;
    gap: 4px;
}
.view-on {
    width: 22px;
    height: 21px;
    display: flex;
    align-items: center;
    justify-content: center;
    box-sizing: border-box;
    background-color: #cce8ff;
    border: 1px solid #66a7e8;
}

/* floating language button and watermark */
.language {
    position: absolute;
    left: 1117px;
    top: 603px;
    width: 127px;
    height: 56px;
    box-sizing: border-box;
    padding-left: 16px;
    display: flex;
    align-items: center;
    gap: 9px;
    background-color: rgba(245,245,245,.6);
    border: 1px solid #dcdcdc;
    border-radius: 12px;
    font-family: Roboto, sans-serif;
    font-size: 15px;
    letter-spacing: .3px;
    color: #222;
}
.watermark {
    position: absolute;
    left: 1038px;
    top: 610px;
    display: flex;
    align-items: center;
    font-family: "Liberation Sans", sans-serif;
    font-size: 50px;
    line-height: 60px;
    color: rgba(255,255,255,.2);
    -webkit-text-stroke: 2px #e2e2e2;
    pointer-events: none;
}
.watermark svg {
    margin: 0 5px 0 10px;
}
.wm-any, .wm-run {
    display: block;
    transform-origin: left center;
}
.wm-any {
    width: 65px;
    transform: scaleX(.63);
}
.wm-run {
    width: 62px;
    transform: scaleX(.57);
}

/* taskbar */
.taskbar {
    height: 40px;
    display: flex;
    align-items: center;
    background-color: #0a1f2d;
}
.start {
    width: 48px;
    display: flex;
    justify-content: center;
}
.task-search {
    width: 288px;
    height: 40px;
    box-sizing: border-box;
    padding-left: 12px;
    display: flex;
    align-items: center;
    gap: 9px;
    background-color: #f2f2f2;
    font-size: 14px;
    color: #222;
}
.task-view {
    width: 50px;
    display: flex;
    justify-content: center;
}
.task-app {
    width: 49px;
    height: 40px;
    box-sizing: border-box;
    display: flex;
    align-items: center;
    justify-content: center;
    position: relative;
}
.task-app.running::after {
    content: "";
    position: absolute;
    left: 5px;
    right: 4px;
    bottom: 0;
    height: 2px;
    background-color: #76b9ed;
}
.task-app.active {
    background-color: #2c3e4b;
    border-bottom: 2px solid #76b9ed;
}
.tray {
    display: flex;
    align-items: center;
    gap: 9px;
    color: #fff;
}
.clock {
    width: 54px;
    text-align: center;
    font-size: 11.300px;
    line-height: 19px;
    white-space: nowrap;
}
.notify {
    margin: 0 25px 0 8px;
}
```
